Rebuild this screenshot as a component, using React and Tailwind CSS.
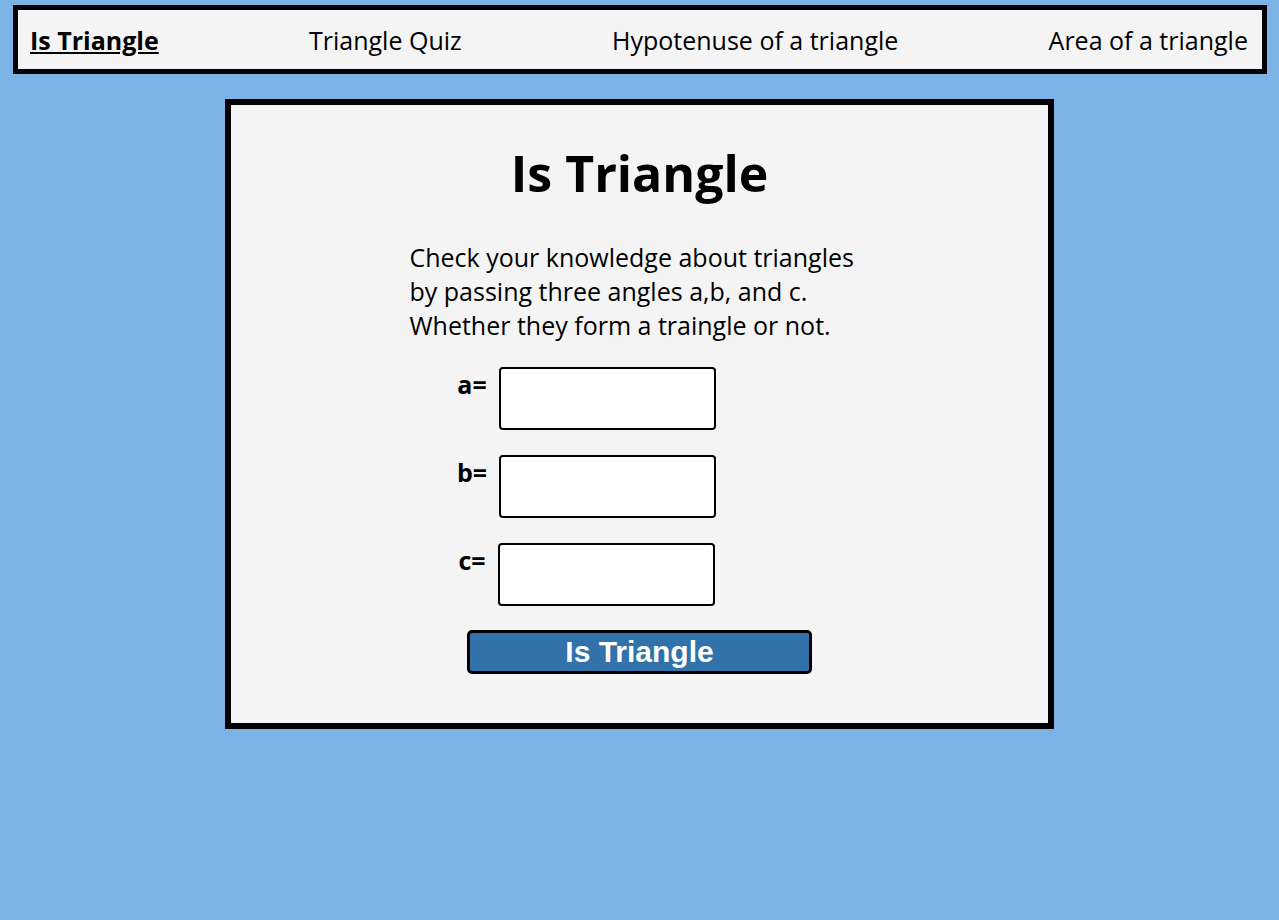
export default function App() {
  const links = ["Is Triangle", "Triangle Quiz", "Hypotenuse of a triangle", "Area of a triangle"];
  const fields = ["a", "b", "c"];
  return (
    <div className="min-h-[920px] bg-[#7bb3e6] pt-[5px] pb-10 text-black" style={{ fontFamily: '"Open Sans", sans-serif' }}>
      <nav className="mr-[12px] ml-[13px] flex items-center justify-between border-[5px] border-black bg-[#f4f4f4] pl-[12px] pr-[14px] pt-[13px] pb-[12px] text-[25px] leading-[34px]">
        {links.map((link, i) => (
          <a key={link} href="#" className={i === 0 ? "font-bold underline" : ""}>
            {link}
          </a>
        ))}
      </nav>

      <main className="mx-auto mt-[25px] w-[829px] border-[6px] border-black bg-[#f4f4f4] pt-[34px] pb-[49px]">
        <h1 className="text-center text-[50px] font-bold leading-[68px]">Is Triangle</h1>
        <p className="mx-auto mt-[33px] w-[460px] text-[25px] leading-[34px]">
          Check your knowledge about triangles
          <br />
          by passing three angles a,b, and c.
          <br />
          Whether they form a traingle or not.
        </p>

        <div className="mt-[25px] flex flex-col gap-[25px] pr-[106px]">
          {fields.map((f) => (
            <label key={f} className="flex items-start justify-center gap-[12px]">
              <span className="text-[25px] font-bold leading-[34px]">{f}=</span>
              <input type="text" className="h-[63px] w-[217px] rounded-[4px] border-2 border-black bg-white px-2" />
            </label>
          ))}
        </div>

        <div className="mt-[24px] flex justify-center">
          <button
            className="h-[44px] w-[345px] rounded-[5px] border-[3px] border-black bg-[#3172ab] text-[30px] font-bold leading-none text-white"
            style={{ fontFamily: '"Liberation Sans", Arial, sans-serif' }}
          >
            Is Triangle
          </button>
        </div>
      </main>
    </div>
  );
}
